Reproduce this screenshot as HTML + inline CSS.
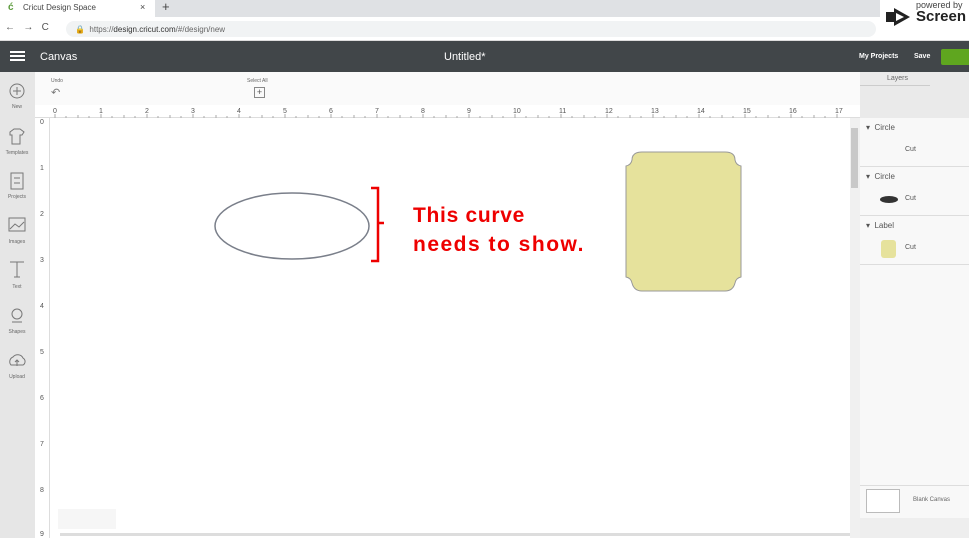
<!DOCTYPE html>
<html><head><meta charset="utf-8"><style>
*{margin:0;padding:0;box-sizing:border-box}
body{width:969px;height:538px;overflow:hidden;background:#fff;font-family:"Liberation Sans",sans-serif;position:relative}
.a{position:absolute}
.sm{font-size:6px;color:#666}
</style></head><body>
<div class="a" style="left:0;top:0;width:969px;height:17px;background:#dfe1e4"></div>
<div class="a" style="left:0;top:0;width:155px;height:17px;background:#fff"></div>
<div class="a" style="left:8px;top:2px;font-size:10px;color:#5a9a3a;font-weight:bold">ć</div>
<div class="a" style="left:23px;top:3px;font-size:8px;color:#444">Cricut Design Space</div>
<div class="a" style="left:140px;top:2px;font-size:9px;color:#444">×</div>
<div class="a" style="left:162px;top:-1px;font-size:13px;color:#444">+</div>
<div class="a" style="left:0;top:17px;width:969px;height:24px;background:#fff;border-bottom:1px solid #ddd"></div>
<div class="a" style="left:5px;top:22px;font-size:10px;color:#555">←&nbsp;&nbsp; →&nbsp;&nbsp; C</div>
<div class="a" style="left:66px;top:21px;width:810px;height:16px;background:#f1f3f4;border-radius:8px"></div>
<div class="a" style="left:75px;top:25px;font-size:8px;color:#666">🔒&nbsp; https://<b style="color:#333;font-weight:normal">design.cricut.com</b>/#/design/new</div>
<div class="a" style="left:880px;top:0;width:89px;height:36px;background:#fff"></div>
<svg class="a" style="left:884px;top:6px" width="30" height="22"><path d="M2 6h8v10H2z M10 2l16 9-16 9z" fill="#222"/><path d="M12 7l8 4-8 4z" fill="#fff"/></svg>
<div class="a" style="left:916px;top:0;font-size:9px;color:#444">powered by</div>
<div class="a" style="left:916px;top:8px;font-size:15px;font-weight:bold;color:#222">Screen</div>
<div class="a" style="left:0;top:41px;width:969px;height:31px;background:#414649"></div>
<div class="a" style="left:10px;top:51px;width:15px;height:2px;background:#fff;box-shadow:0 4px 0 #fff,0 8px 0 #fff"></div>
<div class="a" style="left:40px;top:51px;font-size:11px;color:#fff">Canvas</div>
<div class="a" style="left:444px;top:51px;font-size:11px;color:#fff">Untitled*</div>
<div class="a" style="left:859px;top:53px;font-size:7px;color:#fff;font-weight:bold">My Projects</div>
<div class="a" style="left:914px;top:53px;font-size:7px;color:#fff;font-weight:bold">Save</div>
<div class="a" style="left:941px;top:49px;width:30px;height:16px;background:#5fa61f;border-radius:2px"></div>
<div class="a" style="left:0;top:72px;width:35px;height:466px;background:#e6e6e6"></div>
<div class="a" style="left:35px;top:72px;width:825px;height:33px;background:#fafafa"></div>
<div class="a sm" style="left:51px;top:78px;font-size:5px">Undo</div>
<div class="a" style="left:51px;top:86px;font-size:11px;color:#777">↶</div>
<div class="a sm" style="left:247px;top:78px;font-size:5px">Select All</div>
<div class="a" style="left:254px;top:87px;width:11px;height:11px;border:1px solid #888;font-size:9px;line-height:9px;text-align:center;color:#555">+</div>
<div class="a" style="left:860px;top:72px;width:109px;height:46px;background:#eaeaea"></div>
<div class="a" style="left:887px;top:75px;font-size:7px;color:#666">Layers</div>
<div class="a" style="left:860px;top:85px;width:70px;height:1px;background:#ccc"></div>
<div class="a" style="left:35px;top:105px;width:825px;height:13px;background:#fff;border-bottom:1px solid #ddd"></div>
<div class="a" style="left:35px;top:118px;width:15px;height:420px;background:#fff;border-right:1px solid #ddd"></div>
<svg class="a" style="left:0;top:0" width="969" height="538">
<g font-size="7" fill="#555" font-family="Liberation Sans">
<text x="53" y="113">0</text><text x="99" y="113">1</text><text x="145" y="113">2</text><text x="191" y="113">3</text><text x="237" y="113">4</text><text x="283" y="113">5</text><text x="329" y="113">6</text><text x="375" y="113">7</text><text x="421" y="113">8</text><text x="467" y="113">9</text><text x="513" y="113">10</text><text x="559" y="113">11</text><text x="605" y="113">12</text><text x="651" y="113">13</text><text x="697" y="113">14</text><text x="743" y="113">15</text><text x="789" y="113">16</text><text x="835" y="113">17</text>
<text x="40" y="124">0</text><text x="40" y="170">1</text><text x="40" y="216">2</text><text x="40" y="262">3</text><text x="40" y="308">4</text><text x="40" y="354">5</text><text x="40" y="400">6</text><text x="40" y="446">7</text><text x="40" y="492">8</text><text x="40" y="536">9</text>
</g>
<g stroke="#aaa" stroke-width="1">
<path d="M55 118v-4M66 118v-2M78 118v-3M89 118v-2M101 118v-4M112 118v-2M124 118v-3M135 118v-2M147 118v-4M158 118v-2M170 118v-3M181 118v-2M193 118v-4M204 118v-2M216 118v-3M227 118v-2M239 118v-4M250 118v-2M262 118v-3M273 118v-2M285 118v-4M296 118v-2M308 118v-3M319 118v-2M331 118v-4M342 118v-2M354 118v-3M365 118v-2M377 118v-4M388 118v-2M400 118v-3M411 118v-2M423 118v-4M434 118v-2M446 118v-3M457 118v-2M469 118v-4M480 118v-2M492 118v-3M503 118v-2M515 118v-4M526 118v-2M538 118v-3M549 118v-2M561 118v-4M572 118v-2M584 118v-3M595 118v-2M607 118v-4M618 118v-2M630 118v-3M641 118v-2M653 118v-4M664 118v-2M676 118v-3M687 118v-2M699 118v-4M710 118v-2M722 118v-3M733 118v-2M745 118v-4M756 118v-2M768 118v-3M779 118v-2M791 118v-4M802 118v-2M814 118v-3M825 118v-2M837 118v-4"/>
</g>
<ellipse cx="292" cy="226" rx="77" ry="33" fill="#fff" stroke="#7a7f8a" stroke-width="1.5"/>
<path d="M371 188h7v35h6M378 223v38h-7" fill="none" stroke="#e00" stroke-width="2.5"/>
<text x="413" y="222" font-size="21" letter-spacing="0.7" font-weight="bold" fill="#e00" font-family="Liberation Sans">This curve</text>
<text x="413" y="251" font-size="21" letter-spacing="1.5" font-weight="bold" fill="#e00" font-family="Liberation Sans">needs to show.</text>
<path d="M642 152H725Q735 152 735 160Q736 165 741 166V277Q736 278 735 283Q733 291 725 291H642Q634 291 632 283Q631 278 626 277V166Q631 165 632 160Q632 152 642 152Z" fill="#e6e29c" stroke="#999" stroke-width="1"/>
<g fill="none" stroke="#777" stroke-width="1">
<circle cx="17" cy="91" r="7"/><path d="M17 87v8M13 91h8"/>
<path d="M10 132l4-3h6l4 3-2 3h-2v9h-8v-9h-2z"/>
<rect x="11" y="173" width="12" height="16"/><path d="M14 178h6M14 183h6"/>
<rect x="9" y="218" width="16" height="13"/><path d="M10 229l5-5 4 3 5-5"/>
<path d="M10 262h14M17 262v15M14 277h6"/>
<circle cx="17" cy="314" r="5"/><path d="M12 322h10"/>
<path d="M11 365a5 5 0 0 1 2-8a6 6 0 0 1 10 1a4 4 0 0 1 0 7z M17 366v-6M15 362l2-2 2 2"/>
</g>
<g font-size="5" fill="#666" font-family="Liberation Sans" text-anchor="middle">
<text x="17" y="108">New</text><text x="17" y="154">Templates</text><text x="17" y="198">Projects</text><text x="17" y="243">Images</text><text x="17" y="288">Text</text><text x="17" y="333">Shapes</text><text x="17" y="378">Upload</text>
</g>
</svg>
<div class="a" style="left:850px;top:118px;width:10px;height:420px;background:#f0f0f0"></div>
<div class="a" style="left:851px;top:128px;width:7px;height:60px;background:#c8c8c8"></div>
<div class="a" style="left:860px;top:118px;width:109px;height:420px;background:#f8f8f8"></div>
<div class="a" style="left:866px;top:123px;font-size:8px;color:#555">▾&nbsp; Circle</div>
<div class="a" style="left:905px;top:146px;font-size:7px;color:#555">Cut</div>
<div class="a" style="left:860px;top:166px;width:109px;height:1px;background:#ddd"></div>
<div class="a" style="left:866px;top:172px;font-size:8px;color:#555">▾&nbsp; Circle</div>
<div class="a" style="left:880px;top:196px;width:18px;height:7px;background:#333;border-radius:50%"></div>
<div class="a" style="left:905px;top:195px;font-size:7px;color:#555">Cut</div>
<div class="a" style="left:860px;top:215px;width:109px;height:1px;background:#ddd"></div>
<div class="a" style="left:866px;top:221px;font-size:8px;color:#555">▾&nbsp; Label</div>
<div class="a" style="left:881px;top:240px;width:15px;height:18px;background:#e6e29c;border-radius:3px"></div>
<div class="a" style="left:905px;top:244px;font-size:7px;color:#555">Cut</div>
<div class="a" style="left:860px;top:264px;width:109px;height:1px;background:#ddd"></div>
<div class="a" style="left:860px;top:485px;width:109px;height:1px;background:#ddd"></div>
<div class="a" style="left:866px;top:489px;width:34px;height:24px;background:#fff;border:1px solid #bbb"></div>
<div class="a" style="left:913px;top:497px;font-size:6px;color:#666">Blank Canvas</div>
<div class="a" style="left:860px;top:518px;width:109px;height:20px;background:#eee"></div>
<div class="a" style="left:58px;top:509px;width:58px;height:20px;background:#f6f6f6"></div>
<div class="a" style="left:60px;top:533px;width:790px;height:3px;background:#ddd"></div>
</body></html>
